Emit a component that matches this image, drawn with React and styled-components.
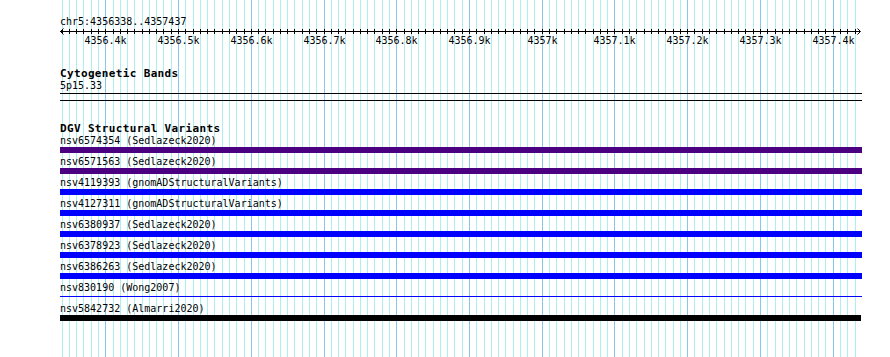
import React from "react";
import styled, { createGlobalStyle } from "styled-components";

const START = 4356338;
const END = 4357437;
const PX = 0.7274;
const X0 = 60.2;
const x = (bp) => X0 + (bp - START) * PX;

const features = [
    { name: "nsv6574354", source: "Sedlazeck2020", color: "#4b0082" },
    { name: "nsv6571563", source: "Sedlazeck2020", color: "#4b0082" },
    { name: "nsv4119393", source: "gnomADStructuralVariants", color: "#0000ff" },
    { name: "nsv4127311", source: "gnomADStructuralVariants", color: "#0000ff" },
    { name: "nsv6380937", source: "Sedlazeck2020", color: "#0000ff" },
    { name: "nsv6378923", source: "Sedlazeck2020", color: "#0000ff" },
    { name: "nsv6386263", source: "Sedlazeck2020", color: "#0000ff" },
    { name: "nsv830190", source: "Wong2007", color: "#0000ff", thin: true },
    { name: "nsv5842732", source: "Almarri2020", color: "#000000", short: true },
];

const ticks = [];
for (let bp = Math.ceil(START / 10) * 10; bp <= END; bp += 10) ticks.push(bp);

const GlobalStyle = createGlobalStyle`
body{
    margin:0;
    background:#fff;
    font-family:"DejaVu Sans Mono", "Liberation Mono", monospace;
    font-size:10px;
    color:#000;
}
`;

const Grid = () => (
    <GridLayer width="890" height="357">
        {ticks.map((bp) => (
            <line
                key={bp}
                x1={Math.round(x(bp)) + 0.5}
                x2={Math.round(x(bp)) + 0.5}
                y1="0"
                y2="357"
                stroke={bp % 100 === 0 ? "#86c8ec" : "#aeeeee"}
                strokeWidth="1"
            />
        ))}
    </GridLayer>
);

const Ruler = () => {
    const rx = (bp) => Math.round(x(bp)) - 60 + 0.5;
    return (
        <RulerSvg width="802" height="18">
            <line x1="0" x2="800" y1="3.5" y2="3.5" stroke="#000" />
            <polyline points="3.5,0.5 0.5,3.5 3.5,6.5" fill="none" stroke="#000" />
            <polyline points="797.5,0.5 800.5,3.5 797.5,6.5" fill="none" stroke="#000" />
            {ticks.map((bp) => (
                <line key={bp} x1={rx(bp)} x2={rx(bp)} y1="1" y2="6" stroke="#000" />
            ))}
            {ticks
                .filter((bp) => bp % 100 === 0)
                .map((bp) => (
                    <text key={bp} x={rx(bp)} y="15.5" textAnchor="middle">
                        {Number((bp / 1000).toFixed(1))}k
                    </text>
                ))}
        </RulerSvg>
    );
};

const App = () => {
    return (
        <>
            <GlobalStyle />
            <Stage>
                <Grid />
                <Content>
                    <Line>chr5:4356338..4357437</Line>
                    <Ruler />
                    <Track>
                        <Title>Cytogenetic Bands</Title>
                        <Label>5p15.33</Label>
                        <Rule />
                        <Rule gap />
                    </Track>
                    <Track>
                        <Title>DGV Structural Variants</Title>
                        <Rows>
                            {features.map((f) => (
                                <Row key={f.name}>
                                    <Line>
                                        {f.name} ({f.source})
                                    </Line>
                                    <Bar color={f.color} thin={f.thin} short={f.short} />
                                </Row>
                            ))}
                        </Rows>
                    </Track>
                </Content>
            </Stage>
        </>
    );
};

const Stage = styled.div`
display:grid;
width:890px;
height:357px;
overflow:hidden;
> *{
    grid-area:1 / 1;
}
`;
const GridLayer = styled.svg`
display:block;
`;
const Content = styled.div`
padding:16px 28px 0 60px;
display:flex;
flex-direction:column;
`;
const Line = styled.div`
line-height:12px;
height:12px;
white-space:pre;
`;
const RulerSvg = styled.svg`
display:block;
overflow:visible;
text{
    font-family:"DejaVu Sans Mono", monospace;
    font-size:10px;
}
`;
const Track = styled.div`
margin-top:22px;
display:flex;
flex-direction:column;
`;
const Title = styled.div`
font-weight:700;
font-size:11px;
letter-spacing:0.35px;
line-height:12px;
height:12px;
`;
const Label = styled(Line)`
margin-top:0;
`;
const Rule = styled.div`
height:1px;
background:#000;
margin-top:${(p) => (p.gap ? "6px" : "1px")};
`;
const Rows = styled.div`
margin-top:0;
display:flex;
flex-direction:column;
`;
const Row = styled.div`
height:21px;
display:flex;
flex-direction:column;
`;
const Bar = styled.div`
height:${(p) => (p.thin ? "1px" : "6px")};
margin-top:${(p) => (p.thin ? "2px" : "0")};
margin-right:${(p) => (p.short ? "1px" : "0")};
background:${(p) => p.color};
`;

export default App;
